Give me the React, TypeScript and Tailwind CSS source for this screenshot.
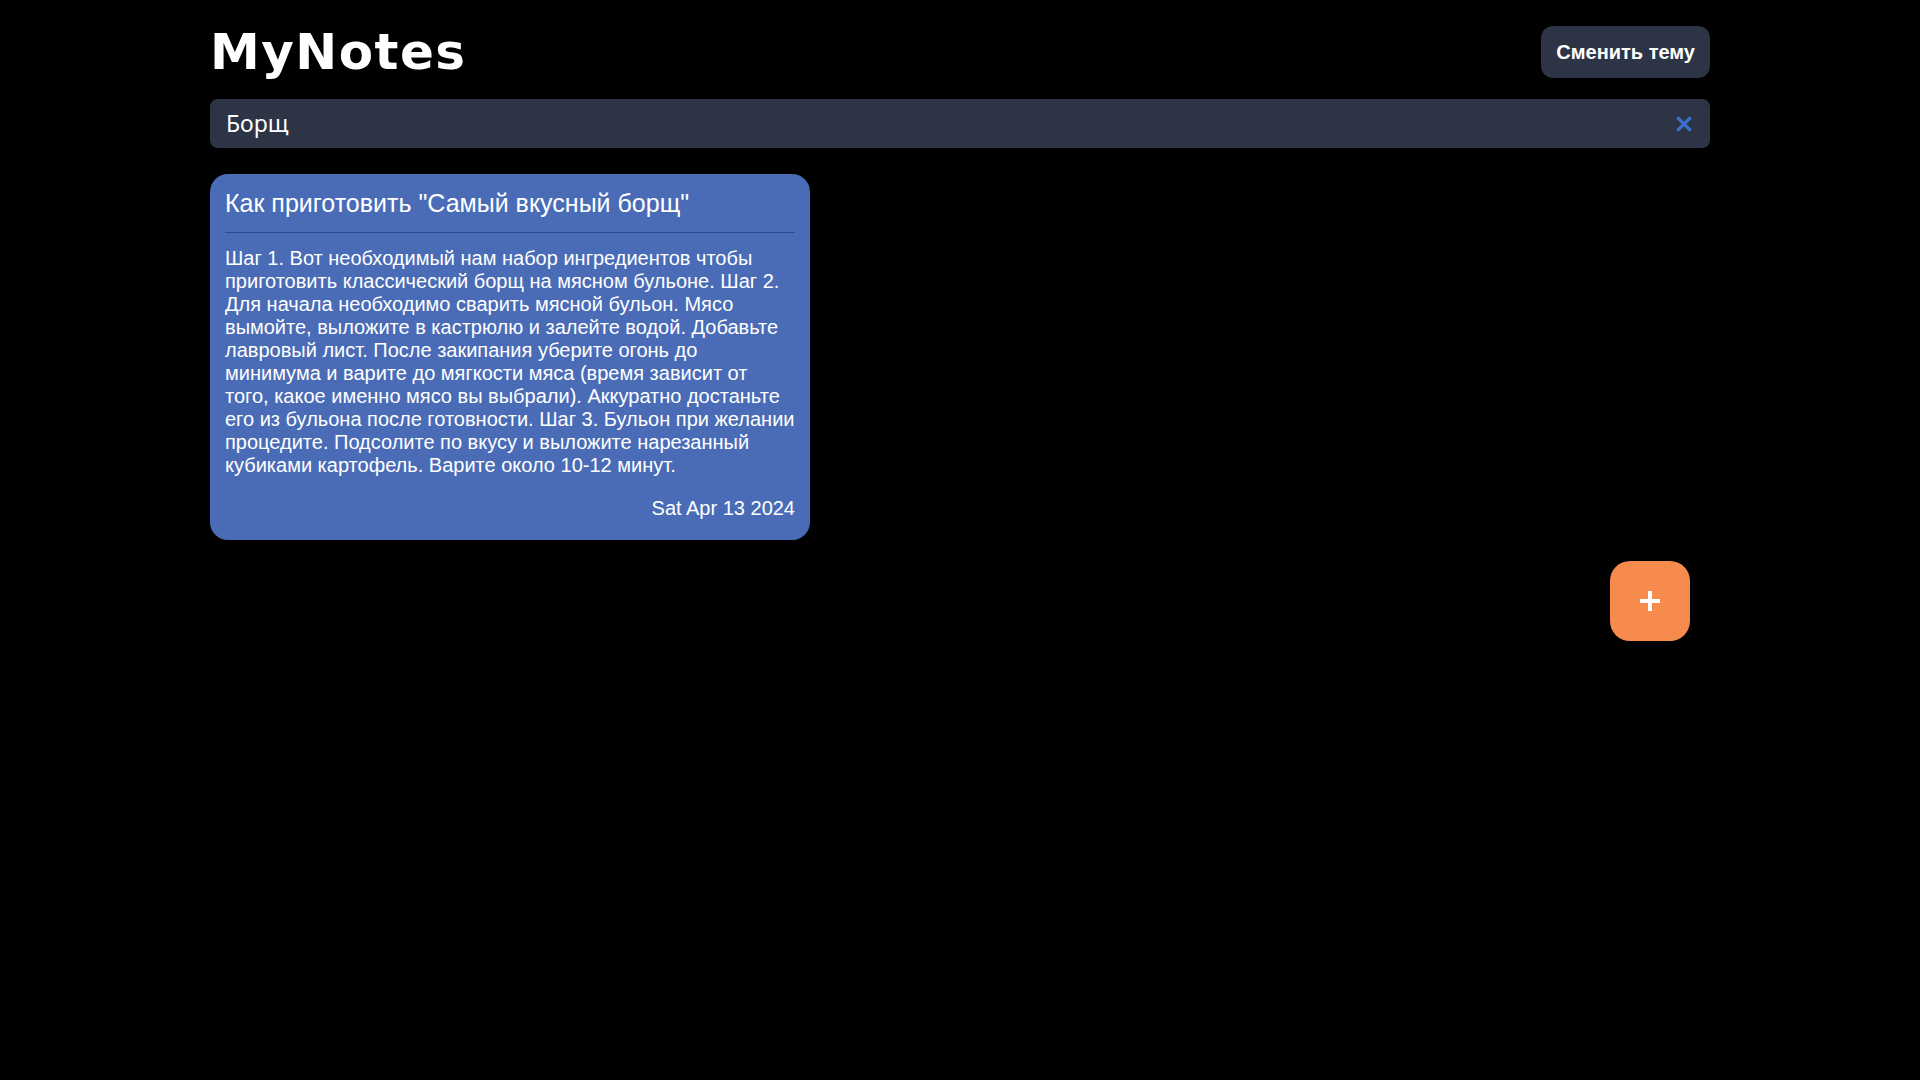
import { useState } from "react"

const note = {
  title: 'Как приготовить "Самый вкусный борщ"',
  text: "Шаг 1. Вот необходимый нам набор ингредиентов чтобы приготовить классический борщ на мясном бульоне. Шаг 2. Для начала необходимо сварить мясной бульон. Мясо вымойте, выложите в кастрюлю и залейте водой. Добавьте лавровый лист. После закипания уберите огонь до минимума и варите до мягкости мяса (время зависит от того, какое именно мясо вы выбрали). Аккуратно достаньте его из бульона после готовности. Шаг 3. Бульон при желании процедите. Подсолите по вкусу и выложите нарезанный кубиками картофель. Варите около 10-12 минут.",
  date: "Sat Apr 13 2024",
}

export default function App() {
  const [query, setQuery] = useState("Борщ")

  return (
    <main className="min-h-screen bg-black text-white font-['Liberation_Sans',Arial,sans-serif]">
      <div className="mx-auto w-[1500px]">
        <header className="flex items-center justify-between pt-[26px]">
          <h1 className="font-['DejaVu_Sans',sans-serif] text-[50px] font-black leading-none tracking-[1.5px]">MyNotes</h1>
          <button className="rounded-xl bg-[#2d3446] px-[15px] py-3 text-xl font-bold leading-7 text-white">
            Сменить тему
          </button>
        </header>

        <div className="mt-[21px] flex h-[49px] items-center rounded-lg bg-[#2d3446] pl-4 pr-[18px]">
          <input
            value={query}
            onChange={(e) => setQuery(e.target.value)}
            className="flex-1 bg-transparent font-['Noto_Sans',sans-serif] text-[23px] text-white outline-none"
          />
          <button onClick={() => setQuery("")} className="text-[#3a6ec8]">
            <svg width="16" height="16" viewBox="0 0 16 16" fill="none" stroke="currentColor" strokeWidth="3.2" strokeLinecap="square">
              <path d="M2.5 2.5l11 11M13.5 2.5l-11 11" />
            </svg>
          </button>
        </div>

        <section className="mt-[26px]">
          <article className="flex w-[600px] flex-col rounded-[18px] bg-[#4a6cb7] px-[15px] pt-[15px] pb-5">
            <h2 className="text-[25px] leading-[29px]">{note.title}</h2>
            <hr className="mt-[14px] border-t border-[#2c4a8c]" />
            <p className="mt-[14px] text-[20px] leading-[23px]">{note.text}</p>
            <span className="mt-5 self-end text-[20px] leading-[23px]">{note.date}</span>
          </article>
        </section>

        <div className="mt-[21px] flex justify-end pr-5">
          <button className="flex h-20 w-20 items-center justify-center rounded-[20px] bg-[#f78b4e]">
            <svg width="22" height="22" viewBox="0 0 22 22" fill="none" stroke="white" strokeWidth="4">
              <path d="M11 1v20M1 11h20" />
            </svg>
          </button>
        </div>
      </div>
    </main>
  )
}
